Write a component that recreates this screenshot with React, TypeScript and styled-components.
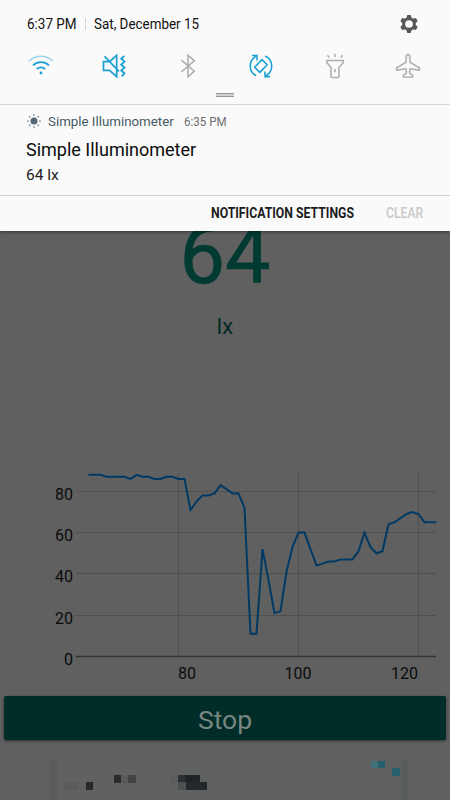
import React from "react";
import styled, { createGlobalStyle } from "styled-components";

const GlobalStyle = createGlobalStyle`
  * { box-sizing: border-box; }
  body { margin: 0; background: #606060; font-family: Roboto, "Liberation Sans", sans-serif; overflow: hidden; }
`;

const Screen = styled.div`
  position: relative;
  width: 450px;
  height: 800px;
  overflow: hidden;
  background: #606060;
`;

/* ---------- notification shade ---------- */

const Shade = styled.section`
  position: absolute;
  inset: 0 0 auto 0;
  height: 231px;
  background: #fafafa;
  box-shadow: 0 1px 3px rgba(0, 0, 0, 0.45);
  display: flex;
  flex-direction: column;
`;

const StatusRow = styled.header`
  height: 48px;
  padding: 0 32px 0 26.5px;
  display: flex;
  align-items: center;
  flex: none;
`;

const Label = styled.span<{ $w: number; $size: number; $scale?: number; $color?: string; $weight?: number }>`
  display: block;
  flex: none;
  width: ${(p) => p.$w}px;
  white-space: nowrap;
  font-size: ${(p) => p.$size}px;
  font-weight: ${(p) => p.$weight ?? 400};
  line-height: 20px;
  color: ${(p) => p.$color ?? "#111"};
  transform: scaleX(${(p) => p.$scale ?? 1});
  transform-origin: left center;
`;

const Divider = styled.i`
  width: 1px;
  height: 12px;
  margin: 0 8.5px 0 8px;
  background: #d2d2d2;
`;

const Spacer = styled.div`
  flex: 1;
`;

const QuickRow = styled.nav`
  height: 35px;
  padding: 1px 28px 0 27px;
  display: flex;
  justify-content: space-between;
  align-items: center;
  flex: none;
`;

const QuickIcon = styled.svg<{ $on?: boolean }>`
  width: 28px;
  height: 28px;
  fill: none;
  stroke: ${(p) => (p.$on ? "#189fd3" : "#aeaeae")};
  stroke-width: 1.55;
  overflow: visible;
`;

const HandleRow = styled.div`
  height: 21px;
  padding-top: 10px;
  display: flex;
  justify-content: center;
  flex: none;
`;

const Handle = styled.div`
  width: 18px;
  height: 4px;
  border: solid #979797;
  border-width: 1px 0;
  background: #d0d0d0;
`;

const Notification = styled.article`
  height: 92px;
  border-top: 1px solid #d8d8d8;
  border-bottom: 1px solid #cdcdcd;
  padding: 7px 27px 0 26px;
  flex: none;
`;

const AppLine = styled.div`
  display: flex;
  align-items: center;
  height: 20px;
`;

const SunIcon = styled.svg`
  width: 16px;
  height: 16px;
  margin: -2px 6px 0 0;
`;

const TitleLine = styled.div`
  margin-top: 8px;
  height: 22px;
`;

const BodyLine = styled.div`
  margin-top: 3px;
`;

const Actions = styled.footer`
  flex: 1;
  display: flex;
  align-items: center;
  justify-content: flex-end;
  gap: 32px;
  padding: 0 26px 1px 0;
`;

/* ---------- dimmed app ---------- */

const AppPage = styled.main`
  height: 100%;
  display: flex;
  flex-direction: column;
  align-items: center;
`;

const Reading = styled.div`
  margin-top: 209px;
  height: 94px;
  font-size: 81px;
  line-height: 94px;
  color: #003a31;
  -webkit-text-stroke: 0.7px #003a31;
`;

const Unit = styled.div`
  height: 28px;
  margin-top: 10px;
  font-size: 22px;
  line-height: 28px;
  color: #002b28;
`;

const Chart = styled.svg`
  display: block;
  flex: none;
  width: 450px;
  height: 230px;
  margin-top: 119px;
  text {
    font: 16px Roboto, sans-serif;
    fill: #0b0b0b;
  }
`;

const StopButton = styled.button`
  flex: none;
  width: 442px;
  height: 44px;
  margin-top: 6px;
  padding: 4px 0 0;
  border: 0;
  border-radius: 2px;
  background: #002d27;
  box-shadow: 0 1px 3px rgba(0, 0, 0, 0.5);
  font: 26.5px/40px Roboto, sans-serif;
  color: #788583;
`;

const Banner = styled.svg`
  flex: none;
  width: 358px;
  height: 40px;
  margin-top: 20px;
  margin-left: 8px;
`;

const firstX = 65;
const lux = [
  88, 88, 88, 87, 87, 87, 87, 86, 88, 87, 87, 86, 86, 87, 87, 86, 86, 71, 75, 78, 78, 79, 83, 81, 79, 79, 72, 11, 11,
  52, 37, 21, 22, 41, 53, 60, 60, 52, 44, 45, 46, 46, 47, 47, 47, 51, 60, 53, 50, 51, 64, 65, 67, 69, 70, 69, 65, 65,
  65,
];
const px = (x: number) => 178.5 + (x - 80) * 6;
const py = (y: number) => 196.5 - y * 2.065;
const trace = lux.map((v, i) => `${px(firstX + i)},${py(v).toFixed(1)}`).join(" ");

const LuxChart = () => (
  <Chart viewBox="0 0 450 230">
    <g stroke="#4f4f4f" strokeWidth="1">
      {[491.5, 532.5, 573.5, 615.5].map((y) => (
        <path key={y} d={`M76 ${y - 460}H436`} />
      ))}
      {[80, 100, 120].map((x) => (
        <path key={x} d={`M${px(x)} 14V196`} />
      ))}
    </g>
    <path d="M76 196.5H436" stroke="#333" strokeWidth="1.5" />
    <polyline points={trace} fill="none" stroke="#003a64" strokeWidth="2" />
    {[80, 60, 40, 20, 0].map((v, i) => (
      <text key={v} x="73" y={40 + i * 41.2} textAnchor="end">
        {v}
      </text>
    ))}
    <text x="178" y="219.4">80</text>
    <text x="298" y="219.4" textAnchor="middle">100</text>
    <text x="418" y="219.4" textAnchor="end">120</text>
  </Chart>
);

const blocks: [number, number, number, number, string][] = [
  [0, 0, 7, 40, "#595a5a"],
  [351, 0, 7, 40, "#585b5b"],
  [7, 3, 344, 37, "#606161"],
  [14, 22, 15, 8, "#5b5b5b"],
  [36, 22, 7, 8, "#252728"],
  [64, 15, 7, 8, "#292b2d"],
  [71, 15, 7, 8, "#5a5c5c"],
  [78, 15, 8, 8, "#424544"],
  [121, 15, 7, 8, "#5b5c5d"],
  [128, 15, 7, 8, "#2c3033"],
  [135, 15, 15, 8, "#202429"],
  [128, 22, 8, 8, "#4d5152"],
  [136, 22, 21, 8, "#23282d"],
  [321, 1, 7, 7, "#427078"],
  [328, 1, 7, 7, "#24606f"],
  [342, 8, 8, 8, "#28616e"],
];

const gear = Array.from({ length: 6 }, (_, i) => i * 60);

export default function App() {
  return (
    <>
      <GlobalStyle />
      <Screen>
        <AppPage>
          <Reading>64</Reading>
          <Unit>lx</Unit>
          <LuxChart />
          <StopButton>Stop</StopButton>
          <Banner viewBox="0 0 358 40" shapeRendering="crispEdges">
            {blocks.map(([x, y, w, h, c], i) => (
              <rect key={i} x={x} y={y} width={w} height={h} fill={c} />
            ))}
          </Banner>
        </AppPage>

        <Shade>
          <StatusRow>
            <Label $w={50} $size={15.5} $scale={0.87}>6:37 PM</Label>
            <Divider />
            <Label $w={106} $size={15.5} $scale={0.865}>Sat, December 15</Label>
            <Spacer />
            <svg width="18" height="20" viewBox="-9 -10 18 20">
              {gear.map((a) => (
                <path
                  key={a}
                  d="M-2.8 -5.5L-1.7 -9H1.7L2.8 -5.5Z"
                  fill="#575757"
                  transform={`rotate(${a})`}
                />
              ))}
              <circle r="5.3" fill="none" stroke="#575757" strokeWidth="2.9" />
            </svg>
          </StatusRow>

          <QuickRow>
            <QuickIcon $on viewBox="-14 -14 28 28">
              <path d="M-12.2 -4.8A17.5 17.5 0 0 1 12.2 -4.8" stroke="#9fd5ea" />
              <path d="M-8 -.7A11.5 11.5 0 0 1 8 -.7M-4.2 3A6 6 0 0 1 4.2 3" strokeWidth="1.8" />
              <circle cy="7" r="1.4" fill="#189fd3" stroke="none" />
            </QuickIcon>
            <QuickIcon $on viewBox="-14 -14 28 28">
              <path d="M-10.5 -4.3H-4.5L2.7 -10.7V10.7L-4.5 4.3H-10.5ZM-9.5 -9.7L5 5.3" strokeWidth="1.7" />
              <path d="M10.3 -10L7.2 -7.2L10.5 -4.4L7.2 -1.3L10.5 1.6L7.2 4.5L10.5 7.3L7.7 10.3" strokeWidth="1.8" />
            </QuickIcon>
            <QuickIcon viewBox="-14 -14 28 28">
              <path d="M-6.5 -5.8L6.3 5.2L0 10.8V-10.8L6.3 -5.2L-6.5 5.8" />
            </QuickIcon>
            <QuickIcon $on viewBox="-14 -14 28 28">
              <path d="M1 -6.4L6.2 -1.2L-1.2 6.4L-6.4 1.2Z" strokeLinejoin="round" />
              <path d="M-4.8 9.8A11 11 0 0 1 -5.1 -9.6M-9 -10.6H-4V-5.4M4.2 -10A11 11 0 0 1 5.1 9.6M9 10.6H4V5.4" />
            </QuickIcon>
            <QuickIcon viewBox="-14 -14 28 28">
              <path d="M-8.2 -5.5H8.2V-3.2L4 1.3V10.5Q4 11.5 3 11.5H-3Q-4 11.5 -4 10.5V1.3L-8.2 -3.2ZM0 3V6.2M0 -12.2V-9M-7.5 -10.7L-5.9 -8.4M7.5 -10.7L5.9 -8.4" />
            </QuickIcon>
            <QuickIcon viewBox="-14 -14 28 28">
              <path
                strokeLinejoin="round"
                d="M-1.9 -3.8V-8.8Q-1.7 -11.3 0 -11.4Q1.7 -11.3 1.9 -8.8V-3.8L11.5 2V4.2L2 2.8L1.6 7.2L4.7 9.2V10.9H-4.7V9.2L-1.6 7.2L-2 2.8L-11.5 4.2V2Z"
              />
            </QuickIcon>
          </QuickRow>

          <HandleRow>
            <Handle />
          </HandleRow>

          <Notification>
            <AppLine>
              <SunIcon viewBox="-8 -8 16 16">
                <circle r="3.5" fill="#536777" />
                {Array.from({ length: 8 }, (_, i) => (
                  <circle key={i} cy="-6" r=".85" fill="#6f808c" transform={`rotate(${i * 45})`} />
                ))}
              </SunIcon>
              <Label $w={136} $size={13.3} $color="#455a64">Simple Illuminometer</Label>
              <Label $w={50} $size={13} $scale={0.89} $color="#6d6d6d">6:35 PM</Label>
            </AppLine>
            <TitleLine>
              <Label $w={170} $size={18} $color="#0c0c0c">Simple Illuminometer</Label>
            </TitleLine>
            <BodyLine>
              <Label $w={40} $size={15.5} $color="#222">64 lx</Label>
            </BodyLine>
          </Notification>

          <Actions>
            <Label $w={143} $size={14} $scale={0.875} $weight={700} $color="#1c1c1c">NOTIFICATION SETTINGS</Label>
            <Label $w={38} $size={14} $scale={0.87} $weight={500} $color="#c8c8c8">CLEAR</Label>
          </Actions>
        </Shade>
      </Screen>
    </>
  );
}
